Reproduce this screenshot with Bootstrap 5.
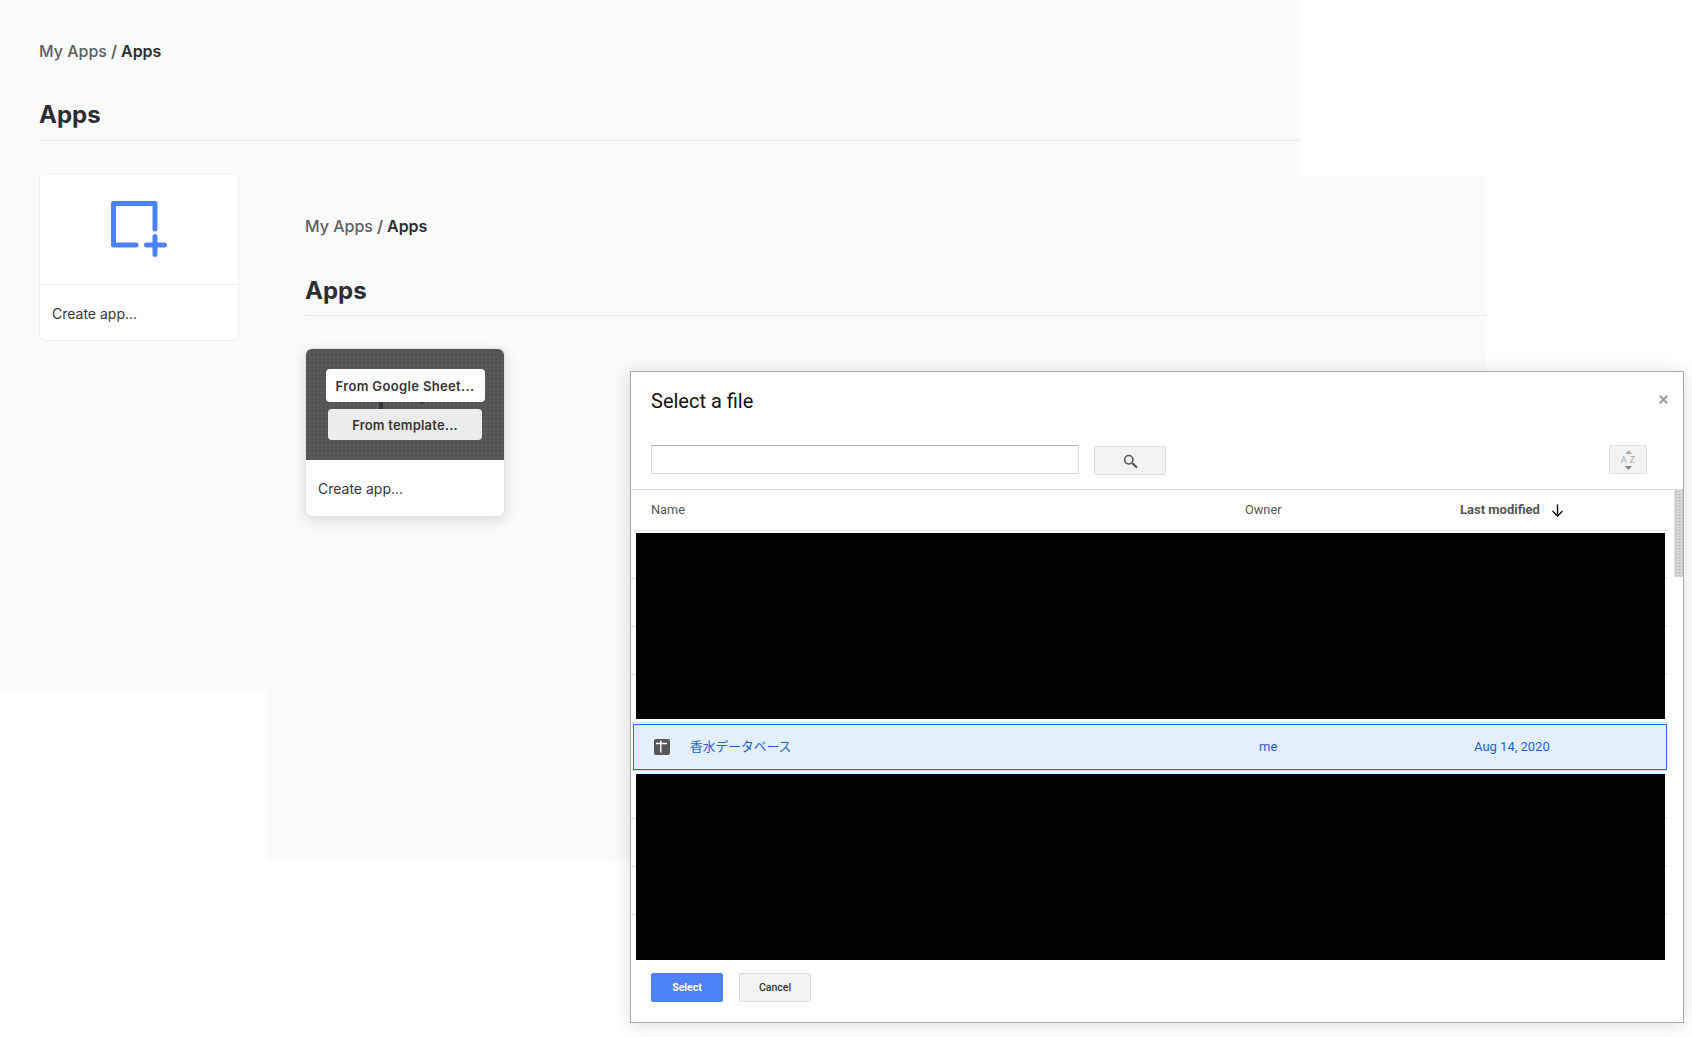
<!DOCTYPE html>
<html lang="en">
<head>
  <meta charset="UTF-8">
  <title>Apps - Select a file</title>
  <meta name="viewport" content="width=device-width, initial-scale=1">
  <link rel="stylesheet" href="https://cdn.jsdelivr.net/npm/bootstrap@5.3.0/dist/css/bootstrap.min.css">
  <style>
    html, body { margin: 0; height: 100%; background: #fff; overflow: hidden; }
    /* Free canvas: three overlapping screenshots */
    .stage { position: relative; width: 1692px; height: 1037px; }
    .shot { position: absolute; background: #fafafa; font-family: Inter, "Liberation Sans", sans-serif; color: #2d2e33; padding: 42px 0 0 39px; }
    .shot-back { left: 0; top: 0; width: 1300px; height: 691px; }
    .shot-mid { left: 266px; top: 175px; width: 1221px; height: 686px; }

    .crumbs { margin: 0; font-size: 16px; line-height: 18px; --bs-breadcrumb-divider-color: #5c5e61; --bs-breadcrumb-item-padding-x: 4px; --bs-breadcrumb-margin-bottom: 0; }
    .crumbs .breadcrumb-item { color: #5c5e61; font-weight: 500; }
    .crumbs .breadcrumb-item.active { color: #2d2e33; font-weight: 600; }
    .page-title { font-size: 24px; line-height: 30px; font-weight: 700; margin: 40px 0 0; padding-bottom: 10px; border-bottom: 1px solid #ececec; }
    .shot-mid .page-title { margin-top: 41px; padding-bottom: 9px; }

    .app-tile { width: 200px; height: 168px; margin-top: 32px; border: 1px solid #efefef; border-radius: 7px; background: #fff; overflow: hidden; }
    .tile-top { height: 111px; border-bottom: 1px solid #efefef; }
    .tile-label { font-size: 14px; line-height: 17px; padding: 20px 12px 0; color: #35363a; }
    .tile-hover { height: 169px; border-color: #e2e2e2; box-shadow: 0 4px 14px rgba(0, 0, 0, .13); }
    .tile-dark { height: 111px; padding-top: 20px; background-color: #58595a; background-image: radial-gradient(#474849 .6px, transparent .8px); background-size: 4px 4px; gap: 7px; position: relative; }
    .tile-btn { font-family: Inter, "Liberation Sans", sans-serif; font-size: 13px; font-weight: 600; letter-spacing: .35px; line-height: 16px; color: #35363a; border: 0; border-radius: 4px; padding: 0; }
    .tile-btn-main { width: 159px; height: 33px; background: #fff; }
    .tile-btn-alt { width: 154px; height: 31px; background: #ececec; letter-spacing: .2px; }
    .tile-mark { position: absolute; left: 73px; top: 53px; width: 4px; height: 7px; background: #34353a; }
    .tile-dot { position: absolute; left: 114px; top: 53px; width: 4px; height: 2px; background: #34353a; border-radius: 0 0 2px 2px; }

    /* Picker dialog */
    .picker { position: absolute; left: 630px; top: 371px; width: 1054px; height: 652px; background: #fff; border: 1px solid #ababab; box-shadow: 0 2px 18px rgba(0, 0, 0, .14); font-family: Roboto, "Liberation Sans", sans-serif; color: #333; }
    .picker-head { height: 73px; padding: 16px 15px 0 20px; }
    .picker-title { font-size: 20px; line-height: 26px; font-weight: 400; color: #111; margin: 0; }
    .picker-close { margin: 7px 0 0; padding: 0; border: 0; background: none; line-height: 0; }
    .picker-tools { height: 45px; padding: 0 36px 0 20px; border-bottom: 1px solid #dcdcdc; }
    .picker-search { width: 428px; height: 29px; border: 1px solid #d6d6d6; border-top-color: #b5b5b5; border-radius: 1px; }
    .tool-btn { height: 29px; width: 72px; margin: 1px 0 0 15px; padding: 0; background: #f2f2f2; border: 1px solid #dedede; border-radius: 2px; }
    .tool-sort { width: 38px; height: 29px; margin-top: 0; color: #aaa; font-size: 9px; line-height: 10px; gap: 1px; }
    .tool-sort span { letter-spacing: 3px; margin-right: -3px; }
    .col-grid { display: grid; grid-template-columns: 594px 215px 1fr; align-items: center; }
    .list-head { height: 41px; padding-left: 20px; margin-right: 15px; border-bottom: 1px solid #e2e2e2; font-size: 12.75px; color: #555; }
    .list-head b { font-weight: 700; font-size: 13px; }
    .sort-arrow { margin-left: 11px; vertical-align: -3px; }
    /* rows are 48px apart, their lines show beside the black blocks */
    .row-lines { padding: 2px 18px 0 5px; background-image: repeating-linear-gradient(to bottom, transparent 0, transparent 47px, #dcdcdc 47px, #dcdcdc 48px); background-size: 1037px 100%; background-repeat: no-repeat; width: 1052px; }
    .redacted { height: 186px; background: #000; width: 1029px; }
    .file-selected { height: 46px; margin: 5px 0 4px -3px; width: 1034px; background: #e4effd; border: 1px solid #1f6bdc; font-size: 13px; color: #1a62d9; padding-left: 20px; grid-template-columns: 605px 215px 1fr; }
    .file-name { gap: 20px; font-size: 12.75px; font-family: Roboto, "Noto Sans CJK JP", sans-serif; }
    .picker-foot { padding: 13px 20px 0; gap: 16px; }
    .foot-btn { width: 72px; height: 29px; padding: 0; font-size: 10.5px; line-height: 12px; border-radius: 2px; }
    .foot-select { background: #4d82f7; border: 1px solid #4d82f7; color: #fff; font-weight: 700; }
    .foot-cancel { background: #f2f2f2; border: 1px solid #dcdcdc; color: #333; font-weight: 500; }
    .scroll-thumb { position: absolute; right: 0; top: 118px; width: 9px; height: 87px; background-color: #d4d4d4; background-image: radial-gradient(#b0b0b0 .6px, transparent .8px); background-size: 3px 3px; border-left: 1px solid #d8d8d8; }
  </style>
</head>
<body>
  <div class="stage">
    <!-- Back screenshot -->
    <section class="shot shot-back">
      <ol class="breadcrumb crumbs">
        <li class="breadcrumb-item">My Apps</li>
        <li class="breadcrumb-item active">Apps</li>
      </ol>
      <h1 class="page-title">Apps</h1>
      <div class="app-tile">
        <div class="tile-top d-flex align-items-center justify-content-center">
          <svg width="56" height="56" viewBox="0 0 56 56" fill="none" stroke="#4d82f7" stroke-width="5" stroke-linecap="round" stroke-linejoin="round">
            <path d="M25 44H2.500V2.500H44V28"/>
            <path d="M35.500 44H53.500M44 35.500V53.500"/>
          </svg>
        </div>
        <div class="tile-label">Create app...</div>
      </div>
    </section>

    <!-- Middle screenshot -->
    <section class="shot shot-mid">
      <ol class="breadcrumb crumbs">
        <li class="breadcrumb-item">My Apps</li>
        <li class="breadcrumb-item active">Apps</li>
      </ol>
      <h1 class="page-title">Apps</h1>
      <div class="app-tile tile-hover">
        <div class="tile-dark d-flex flex-column align-items-center">
          <button type="button" class="tile-btn tile-btn-main">From Google Sheet...</button>
          <button type="button" class="tile-btn tile-btn-alt">From template...</button>
          <span class="tile-mark"></span>
          <span class="tile-dot"></span>
        </div>
        <div class="tile-label">Create app...</div>
      </div>
    </section>

    <!-- File picker dialog -->
    <section class="picker">
      <div class="picker-head d-flex justify-content-between align-items-start">
        <h2 class="picker-title">Select a file</h2>
        <button type="button" class="picker-close" aria-label="Close">
          <svg width="9" height="9" viewBox="0 0 9 9" stroke="#9a9a9a" stroke-width="2"><path d="M.8.800l7.400 7.400M8.200.800L.8 8.200"/></svg>
        </button>
      </div>
      <div class="picker-tools d-flex align-items-start">
        <input type="text" class="picker-search" aria-label="Search">
        <button type="button" class="tool-btn" aria-label="Search">
          <svg width="15" height="15" viewBox="0 0 15 15" fill="none" stroke="#555" stroke-width="1.500"><circle cx="5.800" cy="5.800" r="4.200"/><path d="M9 9l5 4.600" stroke-width="2.200"/></svg>
        </button>
        <button type="button" class="tool-btn tool-sort ms-auto d-flex flex-column align-items-center justify-content-center">
          <svg width="7" height="4" viewBox="0 0 7 4" fill="#b0b0b0"><path d="M3.500 0L7 4H0z"/></svg>
          <span>AZ</span>
          <svg width="7" height="4" viewBox="0 0 7 4" fill="#808080"><path d="M0 0h7L3.500 4z"/></svg>
        </button>
      </div>
      <div class="list-head col-grid">
        <span>Name</span>
        <span>Owner</span>
        <span><b>Last modified</b><svg class="sort-arrow" width="13" height="13" viewBox="0 0 13 13" fill="none" stroke="#111" stroke-width="1.400"><path d="M6.500 .5V12M1.500 7l5 5 5-5"/></svg></span>
      </div>
      <div class="row-lines">
        <div class="redacted"></div>
        <div class="file-selected col-grid">
          <span class="file-name d-flex align-items-center">
            <svg width="16" height="16" viewBox="0 0 16 16"><rect width="16" height="16" rx="2" fill="#565656"/><path d="M2 4.500H13M6.800 1.500V13.500" stroke="#fff" stroke-width="1.400"/></svg>
            <span>香水データベース</span>
          </span>
          <span>me</span>
          <span>Aug 14, 2020</span>
        </div>
        <div class="redacted"></div>
      </div>
      <div class="picker-foot d-flex">
        <button type="button" class="foot-btn foot-select">Select</button>
        <button type="button" class="foot-btn foot-cancel">Cancel</button>
      </div>
      <div class="scroll-thumb"></div>
    </section>
  </div>
  <script src="https://cdn.jsdelivr.net/npm/bootstrap@5.3.0/dist/js/bootstrap.bundle.min.js"></script>
</body>
</html>
